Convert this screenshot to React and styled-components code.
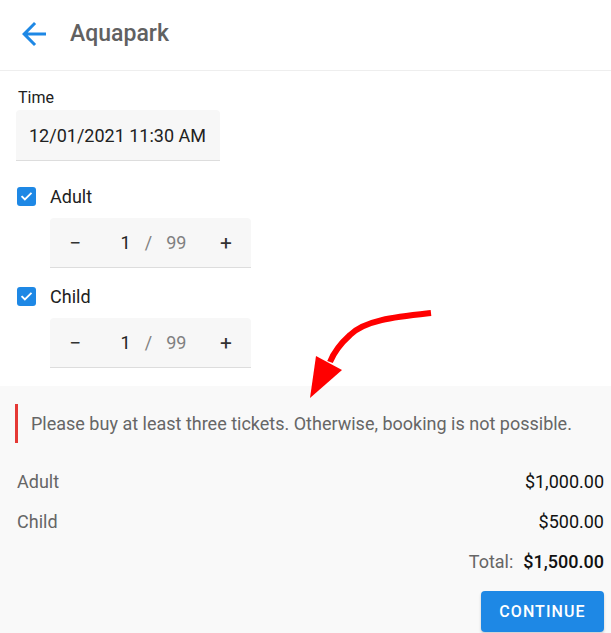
import React, { useState } from "react";
import styled, { createGlobalStyle } from "styled-components";

const GlobalStyle = createGlobalStyle`
  html, body { margin: 0; padding: 0; background: #fff; }
  body { font-family: Roboto, "Noto Sans", Arial, sans-serif; color: #212121; }
  * { box-sizing: border-box; }
`;

const Page = styled.div`
  position: relative;
  min-height: 100vh;
  display: flex;
  flex-direction: column;
`;

const Header = styled.header`
  height: 71px;
  display: flex;
  align-items: center;
  padding: 0 0 3px 16px;
  border-bottom: 1px solid #eeeeee;
`;

const BackButton = styled.button`
  border: 0;
  background: none;
  padding: 0;
  width: 36px;
  height: 36px;
  display: flex;
  align-items: center;
  justify-content: center;
  color: #1e88e5;
  cursor: pointer;
`;

const Title = styled.h1`
  margin: 0 0 0 18px;
  font-size: 23px;
  font-weight: 500;
  color: #616161;
`;

const Form = styled.div`
  padding: 17px 16px 18px 17px;
  display: flex;
  flex-direction: column;
`;

const Label = styled.label`
  font-size: 16px;
  line-height: 20px;
  margin-left: 1px;
  color: #212121;
`;

const Field = styled.div`
  margin-top: 2px;
  margin-left: -1px;
  width: 204px;
  height: 51px;
  background: #f7f7f7;
  border-bottom: 1px solid #dddddd;
  border-radius: 4px 4px 0 0;
  display: flex;
  align-items: center;
  padding-left: 13px;
  font-size: 18px;
  color: #212121;
`;

const CheckRow = styled.div`
  margin-top: ${(p) => p.$top}px;
  display: flex;
  align-items: center;
  height: 20px;
  gap: 14px;
  font-size: 18px;
  color: #212121;
`;

const Box = styled.span`
  width: 19px;
  height: 19px;
  border-radius: 3px;
  background: #1e88e5;
  display: flex;
  align-items: center;
  justify-content: center;
`;

const Stepper = styled.div`
  margin-top: 12px;
  margin-left: 33px;
  width: 201px;
  height: 50px;
  background: #f7f7f7;
  border-bottom: 1px solid #dddddd;
  border-radius: 4px 4px 0 0;
  display: flex;
  align-items: center;
`;

const StepButton = styled.button`
  border: 0;
  background: none;
  width: 50px;
  height: 100%;
  font-family: inherit;
  font-size: 21px;
  color: #333;
  display: flex;
  align-items: center;
  justify-content: center;
  cursor: pointer;
`;

const Count = styled.div`
  flex: 1;
  display: flex;
  justify-content: center;
  align-items: baseline;
  gap: 14px;
  padding-left: 6px;
  font-size: 18px;
`;

const Current = styled.span`
  color: #212121;
`;

const Muted = styled.span`
  color: #808080;
`;

const Summary = styled.section`
  flex: 1;
  background: #f9f9f9;
  padding: 18px 7px 1px 17px;
  display: flex;
  flex-direction: column;
`;

const Alert = styled.div`
  margin-left: -2px;
  border-left: 3px solid #e53935;
  height: 39px;
  display: flex;
  align-items: center;
  padding-left: 13px;
  font-size: 18px;
  color: #666666;
`;

const Rows = styled.div`
  margin-top: 18px;
  display: flex;
  flex-direction: column;
`;

const Row = styled.div`
  height: 40px;
  display: flex;
  align-items: center;
  justify-content: ${(p) => (p.$end ? "flex-end" : "space-between")};
  gap: 10px;
  font-size: 18px;
`;

const RowLabel = styled.span`
  color: #666666;
`;

const Amount = styled.span`
  color: #111;
  font-weight: ${(p) => (p.$bold ? 500 : 400)};
`;

const Actions = styled.div`
  margin-top: 10px;
  display: flex;
  justify-content: flex-end;
`;

const Continue = styled.button`
  width: 123px;
  height: 41px;
  border: 0;
  border-radius: 4px;
  background: #1e88e5;
  color: #fff;
  font-family: inherit;
  font-size: 16px;
  font-weight: 500;
  letter-spacing: 1.1px;
  text-transform: uppercase;
  box-shadow: 0 2px 3px rgba(0, 0, 0, 0.18);
  cursor: pointer;
`;

const Overlay = styled.svg`
  position: absolute;
  left: 0;
  top: 0;
  pointer-events: none;
`;

function Check() {
  return (
    <Box>
      <svg width="13" height="13" viewBox="0 0 24 24">
        <path
          d="M4 12.5l5 5L20 6.5"
          fill="none"
          stroke="#fff"
          strokeWidth="3.4"
          strokeLinecap="square"
        />
      </svg>
    </Box>
  );
}

function Counter({ value }) {
  return (
    <Stepper>
      <StepButton aria-label="decrease">−</StepButton>
      <Count>
        <Current>{value}</Current>
        <Muted>/</Muted>
        <Muted>99</Muted>
      </Count>
      <StepButton aria-label="increase">+</StepButton>
    </Stepper>
  );
}

export default function App() {
  const [adult] = useState(1);
  const [child] = useState(1);
  return (
    <Page>
      <GlobalStyle />
      <Header>
        <BackButton aria-label="back">
          <svg width="36" height="36" viewBox="0 0 24 24">
            <path
              d="M20 11H7.83l5.59-5.59L12 4l-8 8 8 8 1.41-1.41L7.83 13H20v-2z"
              fill="currentColor"
            />
          </svg>
        </BackButton>
        <Title>Aquapark</Title>
      </Header>
      <Form>
        <Label>Time</Label>
        <Field>12/01/2021 11:30 AM</Field>
        <CheckRow $top={25}>
          <Check />
          <span>Adult</span>
        </CheckRow>
        <Counter value={adult} />
        <CheckRow $top={18}>
          <Check />
          <span>Child</span>
        </CheckRow>
        <Counter value={child} />
      </Form>
      <Summary>
        <Alert>Please buy at least three tickets. Otherwise, booking is not possible.</Alert>
        <Rows>
          <Row>
            <RowLabel>Adult</RowLabel>
            <Amount>$1,000.00</Amount>
          </Row>
          <Row>
            <RowLabel>Child</RowLabel>
            <Amount>$500.00</Amount>
          </Row>
          <Row $end>
            <RowLabel>Total:</RowLabel>
            <Amount $bold>$1,500.00</Amount>
          </Row>
        </Rows>
        <Actions>
          <Continue>Continue</Continue>
        </Actions>
      </Summary>
      <Overlay width="611" height="633" viewBox="0 0 611 633">
        <path
          d="M431 313 C395 317 365 320 350 335 C340 344 334 352 330 362"
          fill="none"
          stroke="#ff0000"
          strokeWidth="6"
          strokeLinecap="butt"
        />
        <polygon points="316,356 342,370 310,398" fill="#ff0000" />
      </Overlay>
    </Page>
  );
}
